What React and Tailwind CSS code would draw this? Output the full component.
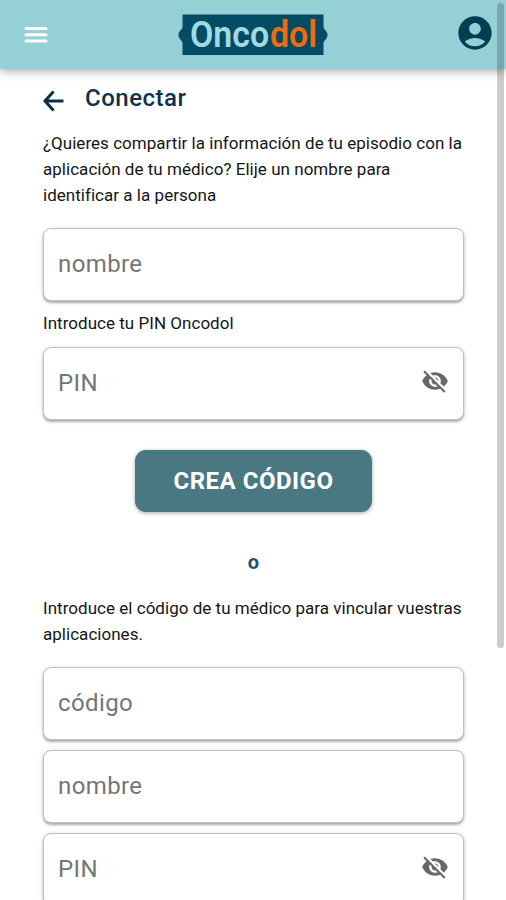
import React from 'react';
import { MdAccountCircle, MdVisibilityOff } from 'react-icons/md';

function Logo() {
  return (
    <div className="relative mr-[14px] h-[42px] w-[150px]">
      <svg className="absolute inset-0 block" width="150" height="42" viewBox="0 0 150 42">
        <path d="M4.500 0.500h141v13c0.500 2 4 3.500 4 7.500s-3.500 5.500-4 7.500v12.500H4.500V28.500C4 26.500 0.500 25 0.500 21s3.500-5.500 4-7.500z" fill="#044c63" />
      </svg>
      <div className="relative ml-[12px] flex h-[43px] w-max origin-left scale-x-[0.94] items-center gap-px text-[36px] font-semibold leading-[43px]">
        <span className="text-[#a0dbe3]">Onco</span>
        <span className="text-[#ee6b10]">dol</span>
      </div>
    </div>
  );
}

function Field({ label, secret }) {
  return (
    <div className="flex h-[73px] shrink-0 items-center justify-between rounded-[8px] border border-[#c0c0c0] bg-white pl-[14px] pr-[14px] shadow-[0_2px_2px_rgba(0,0,0,0.24),0_1px_5px_rgba(0,0,0,0.16)]">
      <span className="text-[24px] leading-7 tracking-[0.4px] text-[#757575]">{label}</span>
      {secret && <MdVisibilityOff className="-mt-1 h-7 w-7 text-[#686868]" />}
    </div>
  );
}

export default function App() {
  return (
    <div className="relative flex h-[900px] w-full flex-col overflow-hidden bg-white font-['Roboto',sans-serif] text-[#151515]">
      {/* Top bar */}
      <header className="flex h-[69px] shrink-0 items-center justify-between bg-[#95d0d7] pl-6 pr-[11px] shadow-[0_2px_9px_rgba(0,0,0,0.35)]">
        <svg className="block" width="40" height="18" viewBox="0 0 40 18" stroke="#fff" strokeWidth="3" strokeLinecap="round">
          <path d="M2 2.500h20M2 8.700h20M2 14.900h20" />
        </svg>
        <Logo />
        <MdAccountCircle className="-mt-1 h-10 w-10 text-[#033e52]" />
      </header>

      <main className="flex flex-col pl-[43px] pr-[42px]">
        <div className="mt-[13px] flex h-8 items-center">
          <svg className="mt-[6px] block" width="22" height="22" viewBox="0 0 22 22" fill="none" stroke="#062f4a" strokeWidth="3">
            <path d="M10.500 1.500L2 11l8.500 9.500M2 11h18.500" />
          </svg>
          <h1 className="ml-[20px] text-[24px] font-medium leading-8 tracking-[0.5px] text-[#0e3250]">Conectar</h1>
        </div>

        <p className="mt-4 text-[17px] leading-[26px] tracking-[0.03px] whitespace-nowrap">
          ¿Quieres compartir la información de tu episodio con la
          <br />
          aplicación de tu médico? Elije un nombre para
          <br />
          identificar a la persona
        </p>
        <div className="mt-[19.500px]">
          <Field label="nombre" />
        </div>
        <p className="mt-[9px] mb-[11px] text-[17px] leading-[26px] tracking-[0.03px]">Introduce tu PIN Oncodol</p>
        <Field label="PIN" secret />

        <button className="mt-[30px] h-[62px] w-[237px] self-center rounded-[11px] bg-[#4a7882] text-[24px] font-bold tracking-[0.5px] text-white shadow-[0_1px_4px_rgba(0,0,0,0.35)]">
          CREA CÓDIGO
        </button>
        <div className="mt-[37px] self-center text-[20px] font-bold leading-[26px] text-[#1c5469]">o</div>

        <p className="mt-[20px] text-[17px] leading-[26px] tracking-[0.03px] whitespace-nowrap">
          Introduce el código de tu médico para vincular vuestras
          <br />
          aplicaciones.
        </p>
        <div className="mt-5 flex flex-col gap-[10px]">
          <Field label="código" />
          <Field label="nombre" />
          <Field label="PIN" secret />
        </div>
      </main>

      {/* Scroll indicator over the page */}
      <div className="absolute right-[2px] top-[3px] h-[645px] w-[7px] rounded-full bg-black/20" />
    </div>
  );
}
